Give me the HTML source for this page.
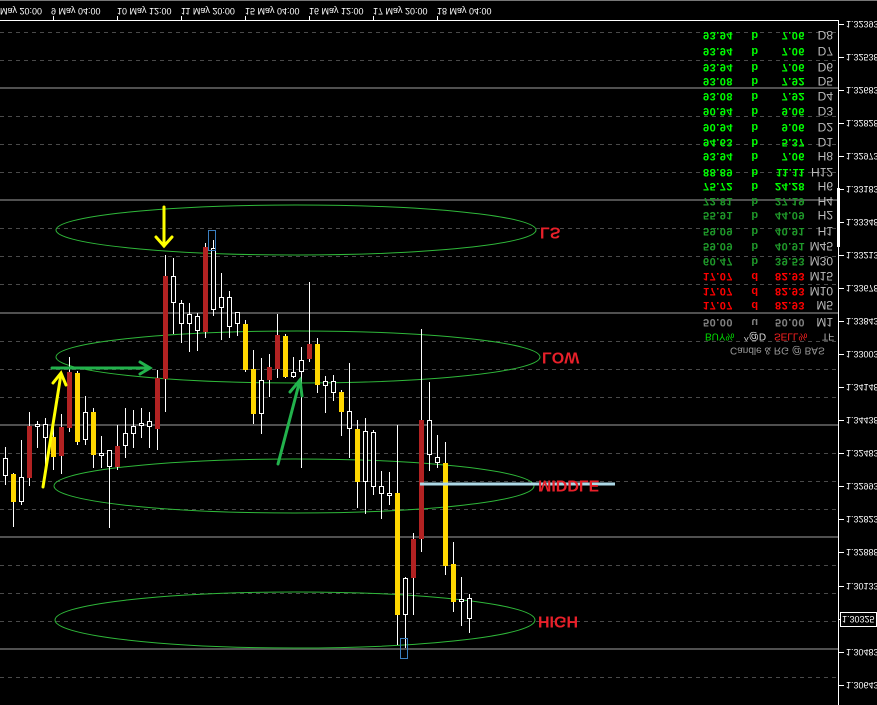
<!DOCTYPE html>
<html><head><meta charset="utf-8"><style>
html,body{margin:0;padding:0;background:#000;width:877px;height:705px;overflow:hidden}
svg{display:block}
text{font-family:"Liberation Sans",sans-serif}
</style></head><body>
<svg width="877" height="705" viewBox="0 0 877 705" xmlns="http://www.w3.org/2000/svg">
<rect width="877" height="705" fill="#000"/>
<line x1="0" y1="0.5" x2="877" y2="0.5" stroke="#777"/>
<g stroke="#4a4a4a" stroke-dasharray="4,4" stroke-width="1">
<line x1="0" x2="838" y1="32.5" y2="32.5"/><line x1="0" x2="838" y1="60.5" y2="60.5"/>
<line x1="0" x2="838" y1="116.5" y2="116.5"/><line x1="0" x2="838" y1="144.5" y2="144.5"/><line x1="0" x2="838" y1="172.5" y2="172.5"/>
<line x1="0" x2="838" y1="228.5" y2="228.5"/><line x1="0" x2="838" y1="256.5" y2="256.5"/><line x1="0" x2="838" y1="284.5" y2="284.5"/>
<line x1="0" x2="838" y1="341.5" y2="341.5"/><line x1="0" x2="838" y1="369.5" y2="369.5"/><line x1="0" x2="838" y1="397.5" y2="397.5"/>
<line x1="0" x2="838" y1="453.5" y2="453.5"/><line x1="0" x2="838" y1="481.5" y2="481.5"/><line x1="0" x2="838" y1="509.5" y2="509.5"/>
<line x1="0" x2="838" y1="565.5" y2="565.5"/><line x1="0" x2="838" y1="593.5" y2="593.5"/><line x1="0" x2="838" y1="621.5" y2="621.5"/>
<line x1="0" x2="838" y1="677.5" y2="677.5"/>
</g>
<g stroke="#505050" stroke-width="2">
<line x1="0" x2="838" y1="88" y2="88"/><line x1="0" x2="838" y1="200" y2="200"/><line x1="0" x2="838" y1="313" y2="313"/>
<line x1="0" x2="838" y1="425" y2="425"/><line x1="0" x2="838" y1="537" y2="537"/><line x1="0" x2="838" y1="649" y2="649"/>
</g>
<line x1="0" y1="20.5" x2="838" y2="20.5" stroke="#fff"/>
<line x1="838.5" y1="20" x2="838.5" y2="705" stroke="#fff"/>
<rect x="837" y="188" width="3" height="59" fill="#fff"/>
<g stroke="#fff"><line x1="53.5" x2="53.5" y1="16" y2="20"/><line x1="117.5" x2="117.5" y1="16" y2="20"/><line x1="181.5" x2="181.5" y1="16" y2="20"/><line x1="245.5" x2="245.5" y1="16" y2="20"/><line x1="309.5" x2="309.5" y1="16" y2="20"/><line x1="373.5" x2="373.5" y1="16" y2="20"/><line x1="437.5" x2="437.5" y1="16" y2="20"/></g>
<g stroke="#fff">
<line x1="839" x2="844" y1="24.5" y2="24.5"/><line x1="839" x2="844" y1="57.5" y2="57.5"/><line x1="839" x2="844" y1="90.5" y2="90.5"/><line x1="839" x2="844" y1="123.5" y2="123.5"/><line x1="839" x2="844" y1="156.5" y2="156.5"/><line x1="839" x2="844" y1="189.5" y2="189.5"/><line x1="839" x2="844" y1="222.5" y2="222.5"/><line x1="839" x2="844" y1="255.5" y2="255.5"/><line x1="839" x2="844" y1="288.5" y2="288.5"/><line x1="839" x2="844" y1="321.5" y2="321.5"/><line x1="839" x2="844" y1="354.5" y2="354.5"/><line x1="839" x2="844" y1="387.5" y2="387.5"/><line x1="839" x2="844" y1="420.5" y2="420.5"/><line x1="839" x2="844" y1="453.5" y2="453.5"/><line x1="839" x2="844" y1="486.5" y2="486.5"/><line x1="839" x2="844" y1="519.5" y2="519.5"/><line x1="839" x2="844" y1="552.5" y2="552.5"/><line x1="839" x2="844" y1="586.5" y2="586.5"/><line x1="839" x2="844" y1="619.5" y2="619.5"/><line x1="839" x2="844" y1="652.5" y2="652.5"/><line x1="839" x2="844" y1="685.5" y2="685.5"/>
</g>
<rect x="840.5" y="612.5" width="36" height="14" fill="#000" stroke="#fff"/>
<g fill="none" stroke="#2fb83a" stroke-width="1">
<ellipse cx="296" cy="230" rx="240" ry="25"/>
<ellipse cx="298" cy="357" rx="242" ry="26"/>
<ellipse cx="294" cy="486" rx="240" ry="27"/>
<ellipse cx="295" cy="620" rx="240" ry="28"/>
</g>
<g stroke="#fff" stroke-width="1">
<line x1="5.5" x2="5.5" y1="447" y2="485"/><line x1="13.5" x2="13.5" y1="473" y2="527"/><line x1="21.5" x2="21.5" y1="440" y2="505"/><line x1="29.5" x2="29.5" y1="412" y2="486"/><line x1="37.5" x2="37.5" y1="421" y2="448"/><line x1="45.5" x2="45.5" y1="418" y2="475"/><line x1="53.5" x2="53.5" y1="424" y2="470"/><line x1="61.5" x2="61.5" y1="414" y2="474"/><line x1="69.5" x2="69.5" y1="357" y2="432"/><line x1="77.5" x2="77.5" y1="371" y2="445"/><line x1="85.5" x2="85.5" y1="396" y2="445"/><line x1="93.5" x2="93.5" y1="408" y2="468"/><line x1="101.5" x2="101.5" y1="436" y2="468"/><line x1="109.5" x2="109.5" y1="450" y2="528"/><line x1="117.5" x2="117.5" y1="425" y2="470"/><line x1="125.5" x2="125.5" y1="408" y2="458"/><line x1="133.5" x2="133.5" y1="410" y2="448"/><line x1="141.5" x2="141.5" y1="408" y2="438"/><line x1="149.5" x2="149.5" y1="412" y2="448"/><line x1="157.5" x2="157.5" y1="370" y2="450"/><line x1="165.5" x2="165.5" y1="255" y2="412"/><line x1="173.5" x2="173.5" y1="258" y2="334"/><line x1="181.5" x2="181.5" y1="300" y2="343"/><line x1="189.5" x2="189.5" y1="303" y2="352"/><line x1="197.5" x2="197.5" y1="313" y2="351"/><line x1="205.5" x2="205.5" y1="243" y2="338"/><line x1="213.5" x2="213.5" y1="240" y2="316"/><line x1="221.5" x2="221.5" y1="273" y2="340"/><line x1="229.5" x2="229.5" y1="291" y2="338"/><line x1="237.5" x2="237.5" y1="312" y2="336"/><line x1="245.5" x2="245.5" y1="320" y2="372"/><line x1="253.5" x2="253.5" y1="350" y2="424"/><line x1="261.5" x2="261.5" y1="358" y2="434"/><line x1="269.5" x2="269.5" y1="354" y2="397"/><line x1="277.5" x2="277.5" y1="314" y2="378"/><line x1="285.5" x2="285.5" y1="334" y2="378"/><line x1="293.5" x2="293.5" y1="357" y2="378"/><line x1="301.5" x2="301.5" y1="347" y2="468"/><line x1="309.5" x2="309.5" y1="282" y2="362"/><line x1="317.5" x2="317.5" y1="338" y2="393"/><line x1="325.5" x2="325.5" y1="376" y2="413"/><line x1="333.5" x2="333.5" y1="375" y2="401"/><line x1="341.5" x2="341.5" y1="390" y2="436"/><line x1="349.5" x2="349.5" y1="363" y2="458"/><line x1="357.5" x2="357.5" y1="420" y2="508"/><line x1="365.5" x2="365.5" y1="418" y2="514"/><line x1="373.5" x2="373.5" y1="430" y2="495"/><line x1="381.5" x2="381.5" y1="471" y2="519"/><line x1="389.5" x2="389.5" y1="472" y2="505"/><line x1="397.5" x2="397.5" y1="425" y2="645"/><line x1="405.5" x2="405.5" y1="577" y2="648"/><line x1="413.5" x2="413.5" y1="533" y2="615"/><line x1="421.5" x2="421.5" y1="329" y2="552"/><line x1="429.5" x2="429.5" y1="382" y2="471"/><line x1="437.5" x2="437.5" y1="435" y2="468"/><line x1="445.5" x2="445.5" y1="442" y2="575"/><line x1="453.5" x2="453.5" y1="542" y2="612"/><line x1="461.5" x2="461.5" y1="577" y2="626"/><line x1="469.5" x2="469.5" y1="594" y2="633"/>
</g>
<g fill="#000" stroke="#fff" stroke-width="1">
<rect x="3.5" y="458.5" width="4" height="17"/><rect x="19.5" y="477.5" width="4" height="24"/><rect x="35.5" y="424.5" width="4" height="2"/><rect x="43.5" y="424.5" width="4" height="13"/><rect x="83.5" y="412.5" width="4" height="27"/><rect x="99.5" y="453.5" width="4" height="2"/><rect x="107.5" y="450.5" width="4" height="16"/><rect x="123.5" y="433.5" width="4" height="12"/><rect x="131.5" y="426.5" width="4" height="7"/><rect x="139.5" y="423.5" width="4" height="2"/><rect x="147.5" y="421.5" width="4" height="5"/><rect x="171.5" y="276.5" width="4" height="26"/><rect x="179.5" y="303.5" width="4" height="20"/><rect x="187.5" y="314.5" width="4" height="9"/><rect x="195.5" y="316.5" width="4" height="14"/><rect x="211.5" y="248.5" width="4" height="61"/><rect x="219.5" y="297.5" width="4" height="10"/><rect x="227.5" y="297.5" width="4" height="29"/><rect x="235.5" y="312.5" width="4" height="11"/><rect x="259.5" y="380.5" width="4" height="33"/><rect x="291.5" y="372.5" width="4" height="4"/><rect x="299.5" y="360.5" width="4" height="11"/><rect x="323.5" y="381.5" width="4" height="4"/><rect x="331.5" y="381.5" width="4" height="11"/><rect x="347.5" y="411.5" width="4" height="17"/><rect x="363.5" y="431.5" width="4" height="50"/><rect x="371.5" y="432.5" width="4" height="54"/><rect x="379.5" y="486.5" width="4" height="7"/><rect x="387.5" y="493.5" width="4" height="2"/><rect x="403.5" y="578.5" width="4" height="36"/><rect x="427.5" y="420.5" width="4" height="34"/><rect x="435.5" y="457.5" width="4" height="5"/><rect x="459.5" y="599.5" width="4" height="2"/><rect x="467.5" y="598.5" width="4" height="20"/>
</g>
<g fill="#ffd700">
<rect x="11" y="474" width="5" height="28"/><rect x="51" y="437" width="5" height="20"/><rect x="75" y="373" width="5" height="69"/><rect x="91" y="412" width="5" height="43"/><rect x="243" y="324" width="5" height="46"/><rect x="251" y="369" width="5" height="45"/><rect x="283" y="336" width="5" height="41"/><rect x="315" y="344" width="5" height="41"/><rect x="339" y="392" width="5" height="20"/><rect x="355" y="429" width="5" height="53"/><rect x="395" y="493" width="5" height="122"/><rect x="443" y="463" width="5" height="103"/><rect x="451" y="564" width="5" height="38"/>
</g>
<g fill="#b22222">
<rect x="27" y="426" width="5" height="52"/><rect x="59" y="427" width="5" height="29"/><rect x="67" y="372" width="5" height="56"/><rect x="115" y="446" width="5" height="21"/><rect x="155" y="378" width="5" height="51"/><rect x="163" y="276" width="5" height="103"/><rect x="203" y="247" width="5" height="85"/><rect x="267" y="367" width="5" height="13"/><rect x="275" y="335" width="5" height="34"/><rect x="307" y="344" width="5" height="15"/><rect x="411" y="539" width="5" height="39"/><rect x="419" y="420" width="5" height="119"/>
</g>
<rect x="208.5" y="230.5" width="7" height="20" fill="none" stroke="#3a7fc0"/>
<rect x="400.5" y="638.5" width="7" height="20" fill="none" stroke="#3a7fc0"/>
<line x1="420" y1="484" x2="615" y2="484" stroke="#add8e6" stroke-width="3"/>
<g stroke="#ffff00" stroke-width="3" fill="none" stroke-linecap="round">
<line x1="164" y1="207" x2="164" y2="246"/><polyline points="156,237 164,246 172,237"/>
<line x1="43" y1="487" x2="61" y2="374"/><polyline points="53,383 61,373 66,385"/>
</g>
<g stroke="#22b24c" stroke-width="3" fill="none" stroke-linecap="round">
<line x1="52" y1="368" x2="150" y2="368"/><polyline points="140,362 150,368 140,374"/>
<line x1="278" y1="464" x2="300" y2="380"/><polyline points="290,392 300,380 302,396"/>
</g>
<g transform="matrix(1,0,0,-1,0,705)" dominant-baseline="central">
<g font-size="9" fill="#fff">
<text x="0" y="694">May 20:00</text><text x="51" y="694">9 May 04:00</text><text x="117" y="694">10 May 12:00</text><text x="181" y="694">11 May 20:00</text><text x="245" y="694">15 May 04:00</text><text x="309" y="694">16 May 12:00</text><text x="373" y="694">17 May 20:00</text><text x="437" y="694">18 May 04:00</text>
</g>
<g font-size="9" fill="#fff">
<text x="846" y="681">1.32393</text><text x="846" y="648">1.32538</text><text x="846" y="615">1.32683</text><text x="846" y="582">1.32828</text><text x="846" y="549">1.32973</text><text x="846" y="516">1.33183</text><text x="846" y="483">1.33348</text><text x="846" y="450">1.33213</text><text x="846" y="417">1.33678</text><text x="846" y="384">1.33843</text><text x="846" y="351">1.33003</text><text x="846" y="318">1.34148</text><text x="846" y="285">1.34438</text><text x="846" y="252">1.32483</text><text x="846" y="219">1.32993</text><text x="846" y="186">1.32823</text><text x="846" y="153">1.32888</text><text x="846" y="119">1.30133</text><text x="842" y="86">1.30325</text><text x="846" y="53">1.30483</text><text x="846" y="20">1.30643</text>
</g>
<g font-size="16" font-weight="bold" fill="#e8202a">
<text x="540" y="473">LS</text><text x="542" y="348">LOW</text><text x="538" y="220">MIDDLE</text><text x="538" y="84">HIGH</text>
</g>
<g font-size="11" font-weight="bold" letter-spacing="0.5">
<g fill="#00ff00">
<text x="733" y="670" text-anchor="end">93.94</text><text x="755" y="670" text-anchor="middle">b</text><text x="805" y="670" text-anchor="end">7.06</text>
<text x="733" y="654" text-anchor="end">93.94</text><text x="755" y="654" text-anchor="middle">b</text><text x="805" y="654" text-anchor="end">7.06</text>
<text x="733" y="638" text-anchor="end">93.94</text><text x="755" y="638" text-anchor="middle">b</text><text x="805" y="638" text-anchor="end">7.06</text>
<text x="733" y="624" text-anchor="end">93.08</text><text x="755" y="624" text-anchor="middle">b</text><text x="805" y="624" text-anchor="end">7.92</text>
<text x="733" y="609" text-anchor="end">93.08</text><text x="755" y="609" text-anchor="middle">b</text><text x="805" y="609" text-anchor="end">7.92</text>
<text x="733" y="594" text-anchor="end">90.94</text><text x="755" y="594" text-anchor="middle">b</text><text x="805" y="594" text-anchor="end">9.06</text>
<text x="733" y="578" text-anchor="end">90.94</text><text x="755" y="578" text-anchor="middle">b</text><text x="805" y="578" text-anchor="end">9.06</text>
<text x="733" y="563" text-anchor="end">94.63</text><text x="755" y="563" text-anchor="middle">b</text><text x="805" y="563" text-anchor="end">5.37</text>
<text x="733" y="549" text-anchor="end">93.94</text><text x="755" y="549" text-anchor="middle">b</text><text x="805" y="549" text-anchor="end">7.06</text>
<text x="733" y="533" text-anchor="end">88.89</text><text x="755" y="533" text-anchor="middle">b</text><text x="805" y="533" text-anchor="end">11.11</text>
<text x="733" y="519" text-anchor="end">75.72</text><text x="755" y="519" text-anchor="middle">b</text><text x="805" y="519" text-anchor="end">24.28</text>
</g>
<g fill="#1f9a2a">
<text x="733" y="504" text-anchor="end">72.81</text><text x="755" y="504" text-anchor="middle">b</text><text x="805" y="504" text-anchor="end">27.19</text>
<text x="733" y="490" text-anchor="end">55.91</text><text x="755" y="490" text-anchor="middle">b</text><text x="805" y="490" text-anchor="end">44.09</text>
<text x="733" y="474" text-anchor="end">59.09</text><text x="755" y="474" text-anchor="middle">b</text><text x="805" y="474" text-anchor="end">40.91</text>
<text x="733" y="459" text-anchor="end">59.09</text><text x="755" y="459" text-anchor="middle">b</text><text x="805" y="459" text-anchor="end">40.91</text>
<text x="733" y="444" text-anchor="end">60.47</text><text x="755" y="444" text-anchor="middle">b</text><text x="805" y="444" text-anchor="end">39.53</text>
</g>
<g fill="#ff0000">
<text x="733" y="429" text-anchor="end">17.07</text><text x="755" y="429" text-anchor="middle">d</text><text x="805" y="429" text-anchor="end">82.93</text>
<text x="733" y="414" text-anchor="end">17.07</text><text x="755" y="414" text-anchor="middle">d</text><text x="805" y="414" text-anchor="end">82.93</text>
<text x="733" y="400" text-anchor="end">17.07</text><text x="755" y="400" text-anchor="middle">d</text><text x="805" y="400" text-anchor="end">82.93</text>
</g>
<g fill="#808080">
<text x="733" y="383" text-anchor="end">50.00</text><text x="755" y="383" text-anchor="middle">u</text><text x="805" y="383" text-anchor="end">50.00</text>
</g>
</g>
<g font-size="12" fill="#bbb" text-anchor="end">
<text x="833" y="670">D8</text><text x="833" y="654">D7</text><text x="833" y="638">D6</text><text x="833" y="624">D5</text><text x="833" y="609">D4</text><text x="833" y="594">D3</text><text x="833" y="578">D2</text><text x="833" y="563">D1</text><text x="833" y="549">H8</text><text x="833" y="533">H12</text><text x="833" y="519">H6</text><text x="833" y="504">H4</text><text x="833" y="490">H2</text><text x="833" y="474">H1</text><text x="833" y="459">M45</text><text x="833" y="444">M30</text><text x="833" y="429">M15</text><text x="833" y="414">M10</text><text x="833" y="400">M5</text><text x="833" y="383">M1</text>
</g>
<g font-size="10">
<text x="705" y="369" fill="#00e000">BUY%</text><text x="744" y="369" fill="#ddd">^@D</text><text x="774" y="369" fill="#ff2020">SELL%</text><text x="822" y="369" fill="#aaa">TF</text>
<text x="730" y="355" fill="#999">Candle &amp; RG @ BAS</text>
</g>
</g>
</svg>
</body></html>
